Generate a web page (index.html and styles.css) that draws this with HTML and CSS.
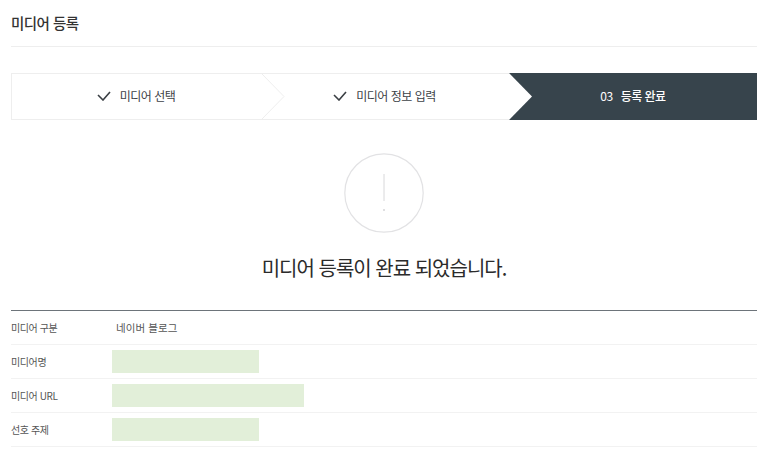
FILE: index.html
```html
<!DOCTYPE html>
<html lang="ko">
<head>
<meta charset="utf-8">
<title>미디어 등록</title>
<link rel="stylesheet" href="styles.css">
</head>
<body>
<main class="page">
  <h1 class="title">미디어 등록</h1>
  <ol class="steps">
    <li class="step step-one">
      <svg class="check" viewBox="0 0 14 10" width="14" height="10"><path d="M1 4l5 5 7-8" fill="none" stroke="#3a3f44" stroke-width="1.6"/></svg>
      <span>미디어 선택</span>
      <svg class="chev" viewBox="0 0 24 47" width="24" height="47"><path d="M0 0l23 23.5L0 47" fill="#fff" stroke="#eeeeee"/></svg>
    </li>
    <li class="step step-two">
      <svg class="check" viewBox="0 0 14 10" width="14" height="10"><path d="M1 4l5 5 7-8" fill="none" stroke="#3a3f44" stroke-width="1.6"/></svg>
      <span>미디어 정보 입력</span>
    </li>
    <li class="step step-three">
      <svg class="notch" viewBox="0 0 23 47" width="23" height="47"><path d="M0 0l23 23.5L0 47z" fill="#fff"/></svg>
      <span class="num">03</span>
      <strong>등록 완료</strong>
    </li>
  </ol>
  <section class="done">
    <svg class="alert" viewBox="0 0 80 80" width="80" height="80">
      <circle cx="40" cy="40" r="39.2" fill="none" stroke="#e2e2e4" stroke-width="1.2"/>
      <path d="M40 21v27" stroke="#d8d8da" stroke-width="1"/>
      <circle cx="40" cy="57" r="1.1" fill="#d8d8da"/>
    </svg>
    <h2 class="message">미디어 등록이 완료 되었습니다.</h2>
  </section>
  <dl class="info">
    <div class="row"><dt>미디어 구분</dt><dd class="plain">네이버 블로그</dd></div>
    <div class="row"><dt>미디어명</dt><dd class="mask mask-s"></dd></div>
    <div class="row"><dt>미디어 URL</dt><dd class="mask mask-l"></dd></div>
    <div class="row"><dt>선호 주제</dt><dd class="mask mask-s"></dd></div>
  </dl>
</main>
</body>
</html>
```
FILE: styles.css
```css
* { box-sizing: border-box; }
html, body { margin: 0; background: #fff; }
body {
  width: 773px;
  height: 457px;
  overflow: hidden;
  font-family: "Noto Sans CJK KR", "Noto Sans", sans-serif;
  color: #333;
}
.page { padding: 0 16px 0 11px; }
.title {
  margin: 0;
  height: 47px;
  padding-top: 13px;
  font-size: 14.5px;
  line-height: 20px;
  font-weight: 500;
  color: #333;
  letter-spacing: -0.55px;
  border-bottom: 1px solid #eeeeee;
}
.steps {
  list-style: none;
  display: flex;
  margin: 26px 0 0;
  padding: 0;
  height: 47px;
  font-size: 12px;
  letter-spacing: -0.5px;
  color: #3d4247;
}
.step {
  position: relative;
  display: flex;
  align-items: center;
  justify-content: center;
  height: 47px;
  padding-bottom: 2px;
  border-top: 1px solid #eeeeee;
  border-bottom: 1px solid #eeeeee;
}
.step-one { width: 250px; border-left: 1px solid #eeeeee; padding-right: 1px; }
.step-two { width: 248px; padding-right: 1px; }
.step-three {
  flex: 1;
  background: #37444c;
  color: #fff;
  border: 0;
}
.check { margin-right: 9px; }
.chev { position: absolute; top: -1px; left: 100%; margin-left: 0; z-index: 1; }
.notch { position: absolute; top: 0; left: 0; }
.num { margin-right: 8px; font-weight: 400; }
.step-three strong { font-weight: 500; }
.done {
  display: flex;
  flex-direction: column;
  align-items: center;
  padding-top: 33px;
}
.alert { display: block; }
.message {
  margin: 20px 0 0;
  font-size: 20px;
  line-height: 30px;
  font-weight: 400;
  letter-spacing: -1px;
  color: #2b2b2b;
}
.info {
  margin: 27px 0 0;
  border-top: 1px solid #6d747a;
}
.row {
  display: flex;
  align-items: center;
  height: 34px;
  border-bottom: 1px solid #f2f2f2;
}
.row dt {
  width: 101px;
  font-size: 10px;
  letter-spacing: -0.4px;
  color: #555;
}
.row dd { margin: 0; }
.plain { padding-left: 4px; font-size: 10.5px; letter-spacing: 0.1px; color: #555; }
.mask { height: 23px; background: #e2efd9; }
.mask-s { width: 147px; }
.mask-l { width: 192px; }
```
